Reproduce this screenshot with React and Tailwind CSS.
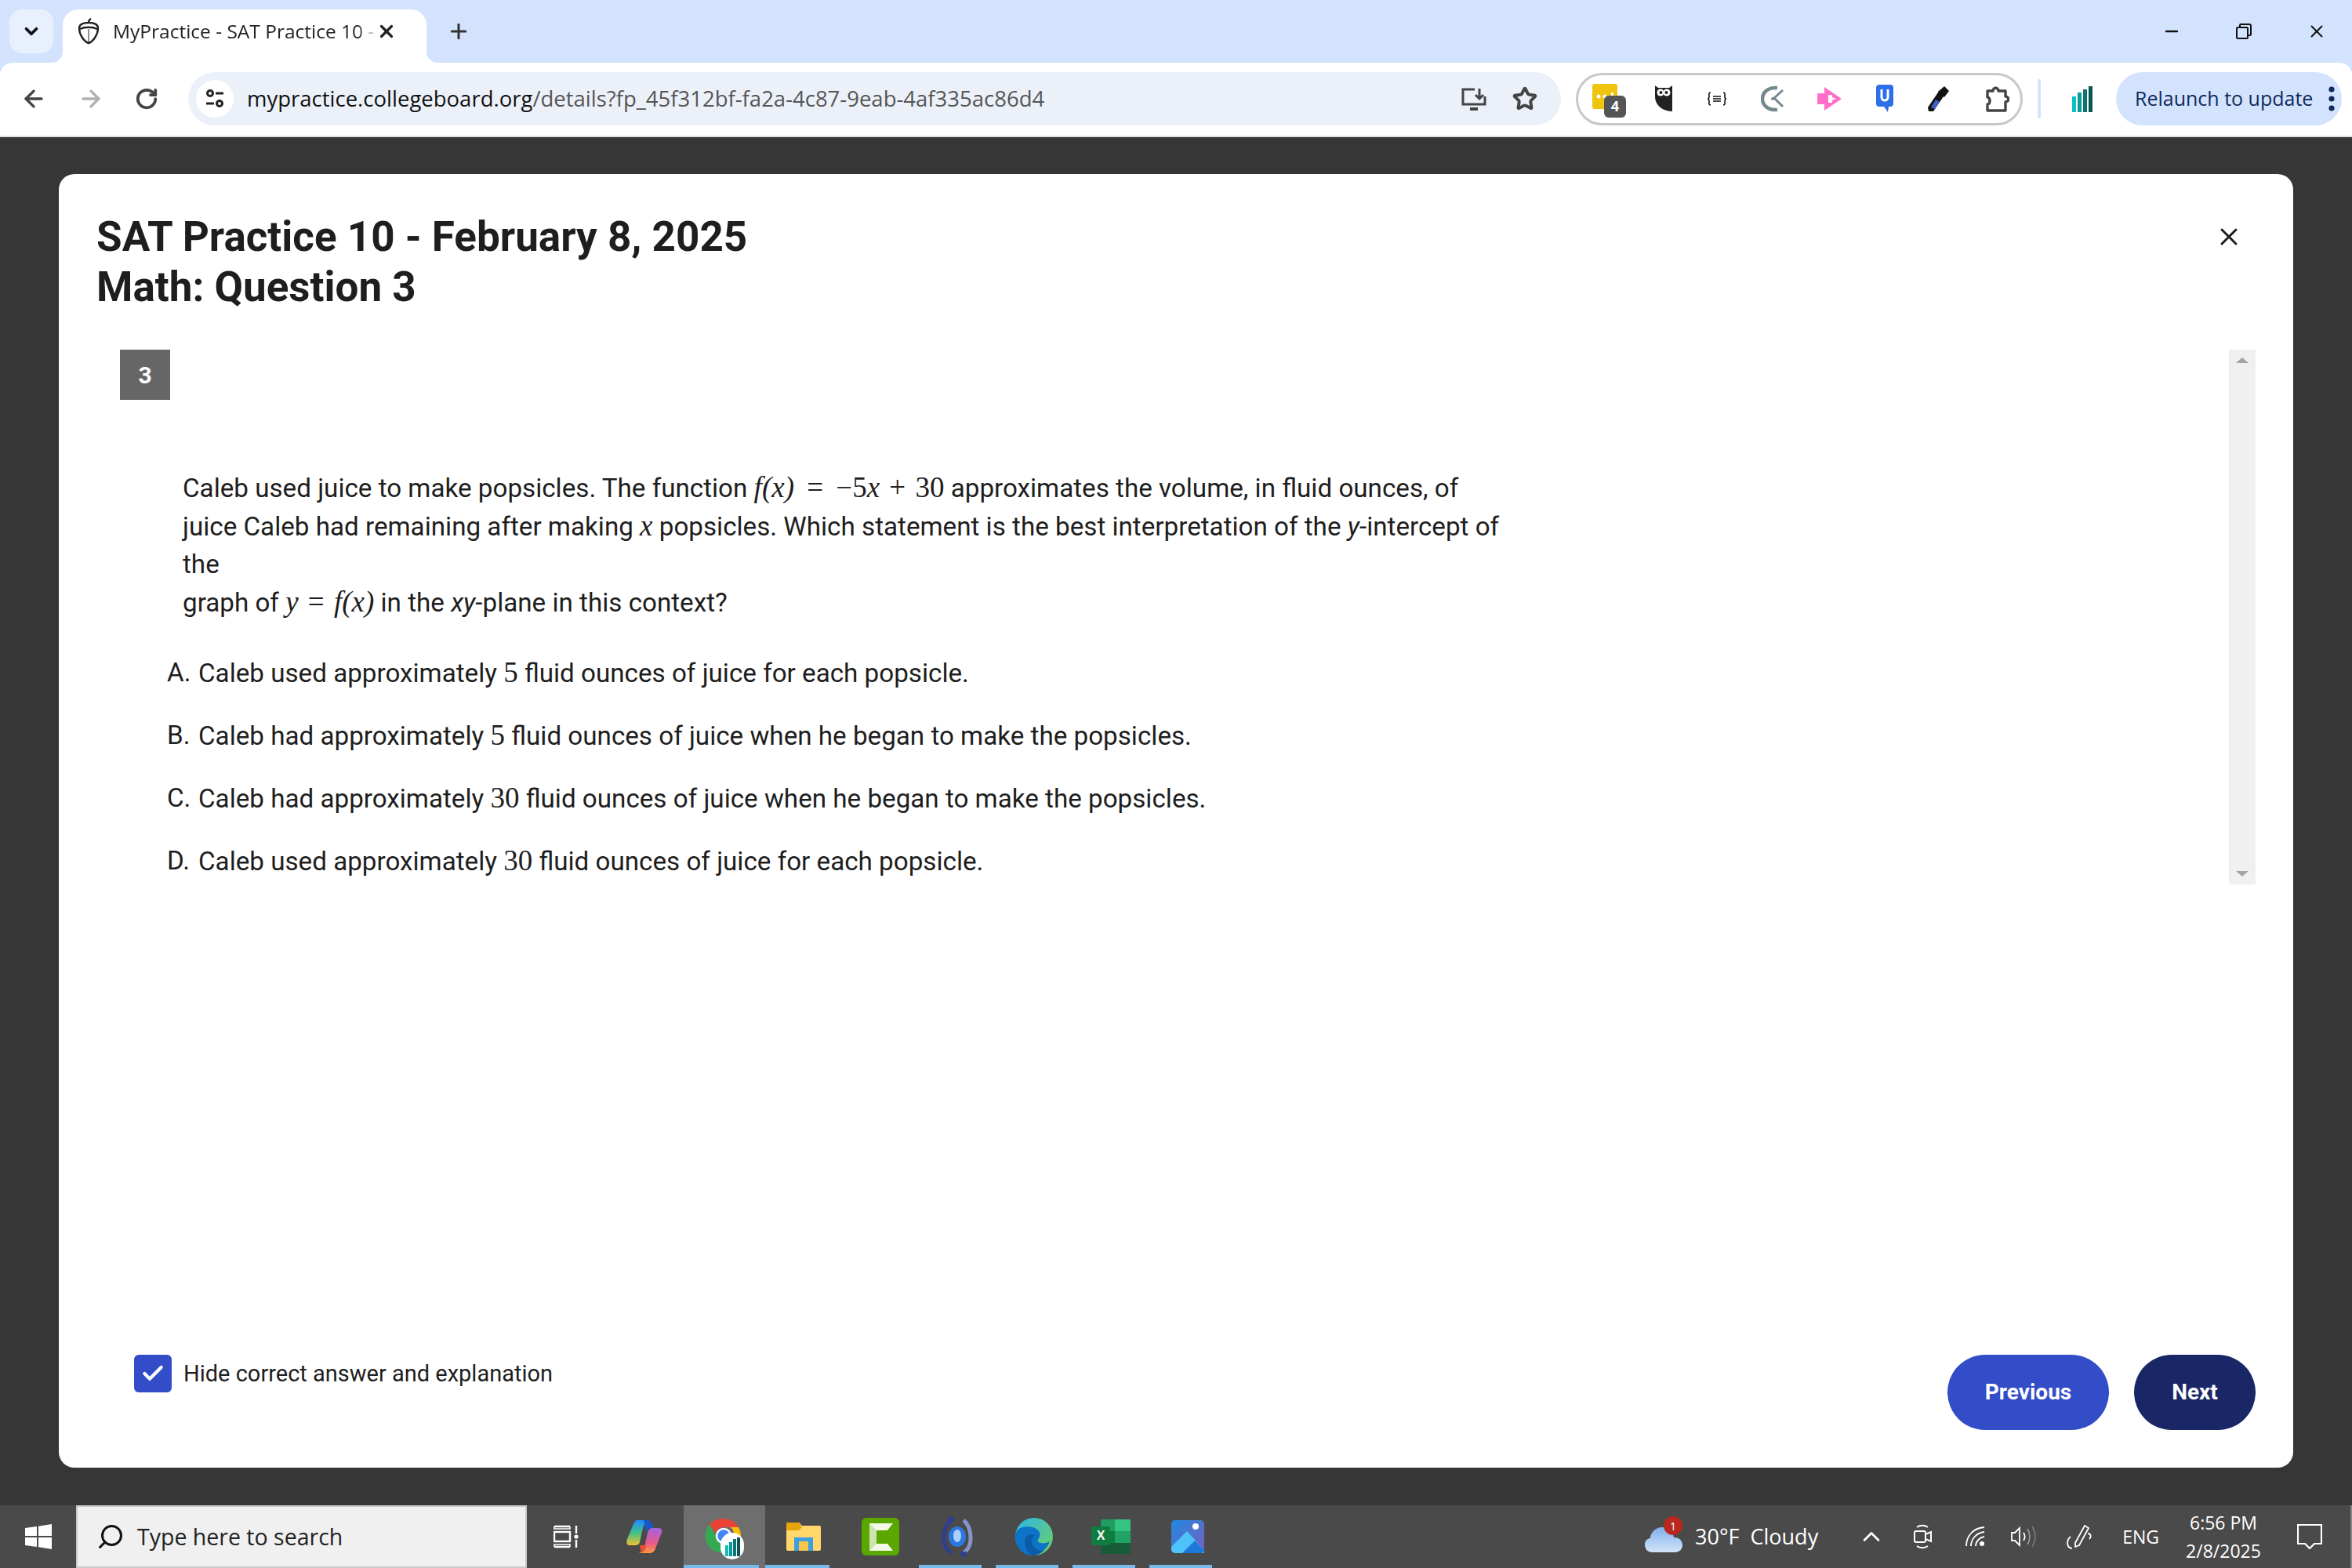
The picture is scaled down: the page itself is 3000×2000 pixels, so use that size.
import React from "react";
import { ArrowLeft, ArrowRight, RotateCw, X, Plus, ChevronDown, Star, ChevronUp, Check, Minus, Search } from "lucide-react";

const M = ({ children, className = "" }) => (
  <span className={`font-['Liberation_Serif',serif] text-[37px] ${className}`}>{children}</span>
);
const I = ({ children, className = "" }) => <M className={`italic ${className}`}>{children}</M>;

const Acorn = () => (
  <svg width="30" height="34" viewBox="0 0 30 34" fill="none" stroke="#222" strokeWidth="2.4">
    <path d="M15 6C8 6 3 8 3 13c0 8 6 17 12 19 6-2 12-11 12-19 0-5-5-7-12-7z" />
    <path d="M4 14c6-3 16-3 22 0" />
    <path d="M15 6c0-2 1-4 3-5" />
    <path d="M15 14v17" strokeWidth="1" />
  </svg>
);

const SiteInfo = () => (
  <svg width="26" height="26" viewBox="0 0 26 26" fill="none" stroke="#222" strokeWidth="3">
    <circle cx="7" cy="6" r="3.5" />
    <path d="M14 6h10M2 19h10" />
    <circle cx="19" cy="19" r="3.5" />
  </svg>
);

const Install = () => (
  <svg width="34" height="30" viewBox="0 0 34 30" fill="none" stroke="#444" strokeWidth="3">
    <path d="M18 3H3v19h28V12" />
    <path d="M12 28h10" strokeWidth="4" />
    <path d="M24 2v13M19 10l5 5 5-5" />
  </svg>
);

const Restore = () => (
  <svg width="20" height="20" viewBox="0 0 20 20" fill="none" stroke="#111" strokeWidth="2">
    <rect x="1" y="5" width="14" height="14" rx="1.5" />
    <path d="M5 5V2a1 1 0 0 1 1-1h11a2 2 0 0 1 2 2v11a1 1 0 0 1-1 1h-3" />
  </svg>
);

const ExtYellow = () => (
  <div className="relative w-[36px] h-[38px]">
    <svg width="32" height="32" viewBox="0 0 32 32">
      <rect width="32" height="32" rx="3" fill="#f1c40f" />
      <circle cx="8" cy="16" r="2.5" fill="#fff" />
      <circle cx="16" cy="16" r="2.5" fill="#fff" />
      <rect x="24" y="11" width="3" height="8" fill="#fff" />
    </svg>
    <div className="absolute left-[15px] top-[15px] w-[28px] h-[28px] rounded-[6px] bg-[#555] text-white text-[19px] font-bold flex items-center justify-center font-['Roboto',sans-serif]">4</div>
  </div>
);
const ExtOwl = () => (
  <svg width="24" height="34" viewBox="0 0 24 34">
    <path d="M1 0l4 3h14l4-3v33C12 33 1 26 1 14z" fill="#222" />
    <circle cx="8" cy="9" r="4.5" fill="#fff" />
    <circle cx="16" cy="9" r="4.5" fill="#fff" />
    <circle cx="8.5" cy="9" r="2" fill="#222" />
    <circle cx="15.5" cy="9" r="2" fill="#222" />
  </svg>
);
const ExtBrace = () => (
  <svg width="26" height="18" viewBox="0 0 26 18" fill="none" stroke="#111" strokeWidth="1.6">
    <path d="M5 1c-3 0-2 3-2 5s-1 3-2 3c1 0 2 1 2 3s-1 5 2 5M21 1c3 0 2 3 2 5s1 3 2 3c-1 0-2 1-2 3s1 5-2 5" />
    <path d="M8 6h10M8 9h10M8 12h10" strokeWidth="1.4" />
  </svg>
);
const ExtClock = () => (
  <svg width="30" height="34" viewBox="0 0 30 34" fill="none" stroke="#74898f" strokeWidth="4.5">
    <path d="M21 3C9 2 2 9 2 17s7 15 19 14" />
    <path d="M28 6l-11 10 11 11" strokeWidth="3" />
    <circle cx="15" cy="17" r="1.5" fill="#74898f" strokeWidth="1" />
  </svg>
);
const ExtPink = () => (
  <svg width="32" height="32" viewBox="0 0 32 32" fill="#ff6ec7">
    <path d="M9 1l22 15L9 31v-8H0V9h9z" />
    <path d="M14 11h5v3l5 2-5 2v3h-5z" fill="#fff" />
  </svg>
);
const ExtU = () => (
  <svg width="22" height="36" viewBox="0 0 22 36">
    <path d="M4 0h14a4 4 0 0 1 4 4v20a4 4 0 0 1-4 4h-2l-1 7-5-7H4a4 4 0 0 1-4-4V4a4 4 0 0 1 4-4z" fill="#2c6fe8" />
    <path d="M7 6v10a4 4 0 0 0 8 0V6" fill="none" stroke="#fff" strokeWidth="3" />
  </svg>
);
const ExtDropper = () => (
  <svg width="30" height="36" viewBox="0 0 30 36">
    <path d="M2 34l-1-5L16 7l7 5L8 34z" fill="#111" />
    <path d="M5 29l6-10 5 3-6 9z" fill="#3f5fc9" />
    <path d="M14 9l8-7 6 6-6 8z" fill="#111" />
  </svg>
);
const Puzzle = () => (
  <svg width="32" height="36" viewBox="0 0 32 36" fill="none" stroke="#444" strokeWidth="3.4" strokeLinejoin="round">
    <path d="M4 8h7c0-5 7-5 7 0h9v7c5 0 5 7 0 7v11H4v-8c4 0 4-9 0-9z" />
  </svg>
);
const Bars = () => (
  <svg width="26" height="34" viewBox="0 0 26 34">
    <rect x="0" y="14" width="5" height="20" fill="#0fc0bf" />
    <rect x="7" y="9" width="5" height="25" fill="#0c9a9a" />
    <rect x="14" y="5" width="5" height="29" fill="#0b7575" />
    <rect x="21" y="1" width="5" height="33" fill="#0a5555" />
  </svg>
);

const WinLogo = () => (
  <svg width="34" height="32" viewBox="0 0 34 32" fill="#fff">
    <path d="M0 5l15-2v12H0zM17 2.700L34 0v15H17zM0 17h15v12L0 27zM17 17h17v15l-17-2.700z" />
  </svg>
);
const TaskView = () => (
  <svg width="32" height="30" viewBox="0 0 32 30" fill="none" stroke="#fff" strokeWidth="2.4">
    <path d="M1 2h20M1 28h20" />
    <path d="M1 2v3h20V2M1 28v-3h20v3" strokeWidth="1.6" />
    <rect x="1" y="9" width="20" height="12" />
    <path d="M29 1v10M29 19v10" />
    <circle cx="29" cy="15" r="2.600" fill="#fff" stroke="none" />
  </svg>
);
const Copilot = () => (
  <svg width="46" height="46" viewBox="0 0 46 46">
    <defs>
      <linearGradient id="cp1" x1="0" y1="0" x2="0" y2="1">
        <stop offset="0" stopColor="#1f8bff" />
        <stop offset="0.5" stopColor="#3fc08a" />
        <stop offset="1" stopColor="#f2c230" />
      </linearGradient>
      <linearGradient id="cp2" x1="0" y1="0" x2="0" y2="1">
        <stop offset="0" stopColor="#a465e0" />
        <stop offset="0.6" stopColor="#e85a8a" />
        <stop offset="1" stopColor="#ff9a3c" />
      </linearGradient>
    </defs>
    <path d="M14 2h14c-4 2-6 6-8 14l-3 14c-1 3-3 4-6 4H3C0 33 0 30 1 26L9 7c1-3 3-5 5-5z" fill="url(#cp1)" />
    <path d="M33 12h8c4 0 5 3 4 6l-8 20c-1 4-4 6-8 6H16c4-2 6-5 8-12l3-14c1-4 3-6 6-6z" fill="url(#cp2)" />
    <path d="M22 2h6c2 0 4 2 5 6l1 4h-3c-3 0-5 2-6 6z" fill="#1757c9" />
    <path d="M17 34l8 0c0 4-2 8-6 10z" fill="#e8502f" />
  </svg>
);
const ChromeIcon = () => (
  <div className="relative w-[50px] h-[50px]">
    <svg width="48" height="48" viewBox="0 0 48 48">
      <path d="M24 2a22 22 0 0 1 19.050 11H24a11 11 0 0 0-10.400 7.400L6 9.500A22 22 0 0 1 24 2z" fill="#ea4335" />
      <path d="M43.050 13A22 22 0 0 1 24 46l9.500-16.500A11 11 0 0 0 33 13z" fill="#fbbc04" />
      <path d="M6 9.500l9 15.500a11 11 0 0 0 14 8.500L24 46A22 22 0 0 1 6 9.500z" fill="#34a853" />
      <circle cx="24" cy="24" r="9" fill="#4285f4" stroke="#fff" strokeWidth="2.500" />
    </svg>
    <div className="absolute left-[20px] top-[20px] w-[30px] h-[34px] rounded-full bg-white flex items-end justify-center pb-[4px] gap-[1px]">
      <div className="w-[4px] h-[14px] bg-[#0fc0bf]" />
      <div className="w-[4px] h-[18px] bg-[#0c9a9a]" />
      <div className="w-[4px] h-[22px] bg-[#0b7575]" />
      <div className="w-[4px] h-[24px] bg-[#0a5555]" />
    </div>
  </div>
);
const Explorer = () => (
  <svg width="44" height="36" viewBox="0 0 44 36">
    <path d="M0 2a2 2 0 0 1 2-2h14l4 4h22a2 2 0 0 1 2 2v28a2 2 0 0 1-2 2H2a2 2 0 0 1-2-2z" fill="#ffd76a" />
    <path d="M0 2a2 2 0 0 1 2-2h14l4 6-4 4H0z" fill="#e5a50a" />
    <path d="M10 19h24v17h-6V24H16v12h-6z" fill="#3ea0e0" />
    <rect x="16" y="24" width="12" height="12" fill="#f7c649" />
  </svg>
);
const Camtasia = () => (
  <svg width="48" height="48" viewBox="0 0 48 48">
    <rect width="48" height="48" rx="6" fill="#5aa700" />
    <path d="M10 7h30l-7 9H19v17h14l7 9H10z" fill="#f4f8e8" />
    <path d="M10 7l9 9v17l-9 9z" fill="#cfe3b0" />
  </svg>
);
const Orb = () => (
  <svg width="48" height="50" viewBox="0 0 48 50" fill="none">
    <path d="M16 4C6 12 2 36 16 46" stroke="#2f3f90" strokeWidth="5" />
    <path d="M32 4c10 8 14 32 0 42" stroke="#8893c9" strokeWidth="5" />
    <rect x="12" y="0" width="8" height="6" fill="#2f3f90" />
    <rect x="28" y="44" width="8" height="6" fill="#2f3f90" />
    <ellipse cx="24" cy="25" rx="11" ry="13" fill="#2b78e0" />
    <ellipse cx="24" cy="24" rx="5" ry="8" fill="#a8d0fa" />
  </svg>
);
const Edge = () => (
  <svg width="48" height="48" viewBox="0 0 48 48">
    <defs>
      <linearGradient id="ed1" x1="0" y1="0" x2="1" y2="1">
        <stop offset="0" stopColor="#2fb6ea" />
        <stop offset="1" stopColor="#6fd25a" />
      </linearGradient>
    </defs>
    <circle cx="24" cy="24" r="24" fill="url(#ed1)" />
    <path d="M0 24C0 12 12 10 22 12c8 2 12 8 8 14-2 3-2 5 2 6 4 1 9 0 12-2-4 10-12 18-22 18C8 48 0 36 0 24z" fill="#0c73c7" />
    <path d="M12 30c0-8 8-10 14-8-4 2-6 6-4 12 2 5 8 9 14 8-4 4-10 6-14 6-6-2-10-10-10-18z" fill="#0d5aa8" />
  </svg>
);
const Excel = () => (
  <div className="relative w-[50px] h-[44px]">
    <svg width="50" height="44" viewBox="0 0 50 44" className="absolute left-0 top-0">
      <path d="M12 2a2 2 0 0 1 2-2h16v15H12z" fill="#1f9d5e" />
      <path d="M30 0h18a2 2 0 0 1 2 2v13H30z" fill="#33c481" />
      <rect x="12" y="15" width="18" height="15" fill="#107c41" />
      <rect x="30" y="15" width="20" height="15" fill="#21a366" />
      <path d="M12 30h38v12a2 2 0 0 1-2 2H14a2 2 0 0 1-2-2z" fill="#185c37" />
    </svg>
    <div className="absolute left-0 top-[9px] w-[24px] h-[24px] rounded-[2px] bg-[#107c41] text-white text-[16px] font-bold flex items-center justify-center font-['Liberation_Sans',sans-serif]">X</div>
  </div>
);
const Photos = () => (
  <svg width="42" height="42" viewBox="0 0 42 42">
    <defs>
      <linearGradient id="ph1" x1="0" y1="0" x2="1" y2="1">
        <stop offset="0" stopColor="#1f8ae0" />
        <stop offset="1" stopColor="#7a5cc0" />
      </linearGradient>
    </defs>
    <rect width="42" height="42" rx="5" fill="url(#ph1)" />
    <circle cx="31" cy="8" r="4" fill="#fff" />
    <path d="M0 34L20 14l22 24v4H5a5 5 0 0 1-5-5z" fill="#4fc3f7" />
    <path d="M14 42l16-16 12 12v0a4 4 0 0 1-4 4z" fill="#1e78d8" />
  </svg>
);

const Cloud = () => (
  <div className="relative w-[48px] h-[40px]">
    <svg width="48" height="34" viewBox="0 0 48 34" className="absolute left-0 top-[6px]">
      <defs>
        <linearGradient id="cl1" x1="0" y1="0" x2="0" y2="1">
          <stop offset="0" stopColor="#7fb0ec" />
          <stop offset="1" stopColor="#d2e4f9" />
        </linearGradient>
      </defs>
      <path d="M10 34C2 34 0 28 0 24c0-6 5-8 7-8 0-8 8-14 15-14 8 0 14 6 15 13 6 0 11 3 11 10 0 5-4 9-10 9z" fill="url(#cl1)" />
    </svg>
    <div className="absolute left-[24px] top-[-6px] w-[24px] h-[24px] rounded-full bg-[#b9281e] text-white text-[14px] flex items-center justify-center font-['Open_Sans',sans-serif]">1</div>
  </div>
);
const MeetIcon = () => (
  <svg width="24" height="32" viewBox="0 0 24 32" fill="none" stroke="#fff" strokeWidth="2">
    <path d="M4 4c4-3 10-3 14 0M4 28c4 3 10 3 14 0" />
    <rect x="1" y="9" width="14" height="14" rx="2" />
    <path d="M15 13l7-3v12l-7-3" />
  </svg>
);
const Wifi = () => (
  <svg width="26" height="26" viewBox="0 0 26 26" fill="none" stroke="#fff" strokeWidth="1.8">
    <path d="M1 25C1 12 10 2 24 1" />
    <path d="M7 25C7 16 14 8 24 7" />
    <path d="M13 25c0-6 5-11 11-12" />
    <circle cx="21" cy="22" r="3" fill="#fff" stroke="none" />
  </svg>
);
const Speaker = () => (
  <svg width="34" height="28" viewBox="0 0 34 28" fill="none" stroke="#fff" strokeWidth="1.8">
    <path d="M1 9h4l6-6v22l-6-6H1z" />
    <path d="M16 9c2 3 2 7 0 10" />
    <path d="M21 4c4 6 4 14 0 20" stroke="#999" />
    <path d="M27 1c5 8 5 18 0 26" stroke="#777" />
  </svg>
);
const Pen = () => (
  <svg width="34" height="32" viewBox="0 0 34 32" fill="none" stroke="#fff" strokeWidth="1.800">
    <path d="M12 24L24 2l5 3-12 22-5 2z" />
    <path d="M6 16c-5 4-6 14 2 15M28 12c4 0 5 4 2 7" />
  </svg>
);
const Notif = () => (
  <svg width="32" height="32" viewBox="0 0 32 32" fill="none" stroke="#fff" strokeWidth="2.200">
    <path d="M1 1h30v24H22l-6 6-6-6H1z" />
  </svg>
);

const TaskSlot = ({ w, bar, barW, active, children }) => (
  <div className={`relative h-full flex items-center justify-center shrink-0 ${w} ${active ? "bg-[#6e6e6e]" : ""}`}>
    {children}
    {bar && <div className={`absolute left-0 bottom-0 h-[4px] ${barW} bg-[#76b9ed]`} />}
  </div>
);

const options = [
  ["A.", "Caleb used approximately ", "5", " fluid ounces of juice for each popsicle."],
  ["B.", "Caleb had approximately ", "5", " fluid ounces of juice when he began to make the popsicles."],
  ["C.", "Caleb had approximately ", "30", " fluid ounces of juice when he began to make the popsicles."],
  ["D.", "Caleb used approximately ", "30", " fluid ounces of juice for each popsicle."],
];

export default function App() {
  return (
    <div className="w-[3000px] h-[2000px] flex flex-col bg-[#363636] overflow-hidden">
      {/* title bar */}
      <div className="h-[80px] bg-[#d3e3fd] flex shrink-0 font-['Open_Sans',sans-serif]">
        <div className="ml-[12px] mt-[12px] w-[56px] h-[56px] rounded-[16px] bg-[#e9f0fd] flex items-center justify-center">
          <ChevronDown size={26} strokeWidth={3.5} color="#111" />
        </div>
        <div className="relative ml-[12px] mt-[12px] w-[464px] h-[68px] bg-white rounded-t-[20px] flex items-center pl-[18px] pb-[12px]">
          <div className="absolute left-[-14px] bottom-0 w-[14px] h-[14px] bg-white">
            <div className="w-full h-full bg-[#d3e3fd] rounded-br-[14px]" />
          </div>
          <div className="absolute right-[-14px] bottom-0 w-[14px] h-[14px] bg-white">
            <div className="w-full h-full bg-[#d3e3fd] rounded-bl-[14px]" />
          </div>
          <Acorn />
          <span className="ml-[16px] w-[338px] text-[24.5px] text-[#222] whitespace-nowrap overflow-hidden [mask-image:linear-gradient(to_right,black_92%,transparent)]">
            MyPractice - SAT Practice 10 - February 8
          </span>
          <X size={26} strokeWidth={3} color="#222" className="ml-[-2px]" />
        </div>
        <div className="ml-[26px] mt-[26px] h-[28px] flex items-center">
          <Plus size={30} strokeWidth={2.4} color="#333" />
        </div>
        <div className="ml-auto flex items-center h-[80px] pr-[32px] gap-[70px]">
          <Minus size={24} strokeWidth={2.4} color="#111" />
          <Restore />
          <X size={26} strokeWidth={1.8} color="#111" />
        </div>
      </div>

      {/* toolbar */}
      <div className="h-[95px] shrink-0 bg-[#d3e3fd]">
        <div className="h-[93px] bg-white rounded-t-[16px] flex items-center font-['Open_Sans',sans-serif] pb-[1px]">
          <div className="w-[240px] shrink-0 flex items-center pl-[26px] gap-[39px]">
            <ArrowLeft size={34} strokeWidth={2.4} color="#444" />
            <ArrowRight size={34} strokeWidth={2.4} color="#b0b0b0" />
            <RotateCw size={30} strokeWidth={3} color="#444" />
          </div>
          <div className="w-[1751px] h-[68px] rounded-full bg-[#ecf1f9] flex items-center shrink-0">
            <div className="ml-[10px] w-[48px] h-[48px] rounded-full bg-white flex items-center justify-center">
              <SiteInfo />
            </div>
            <div className="ml-[17px] text-[27.500px] text-[#555] whitespace-nowrap">
              <span className="text-[#111]">mypractice.collegeboard.org</span>/details?fp_45f312bf-fa2a-4c87-9eab-4af335ac86d4
            </div>
            <div className="ml-auto mr-[30px] flex items-center gap-[32px]">
              <Install />
              <Star size={32} strokeWidth={3} color="#444" />
            </div>
          </div>
          <div className="ml-[19px] w-[570px] h-[67px] rounded-full border-[3px] border-[#c8c8c8] shrink-0 flex items-center justify-between pl-[18px] pr-[14px]">
            <ExtYellow />
            <ExtOwl />
            <ExtBrace />
            <ExtClock />
            <ExtPink />
            <ExtU />
            <ExtDropper />
            <Puzzle />
          </div>
          <div className="ml-[19px] w-[4px] h-[50px] rounded-full bg-[#d3e3fd] shrink-0" />
          <div className="ml-[40px] shrink-0"><Bars /></div>
          <div className="ml-[30px] w-[288px] h-[68px] rounded-full bg-[#d3e3fd] flex items-center pl-[24px] text-[25px] text-[#0f2a5c] whitespace-nowrap shrink-0">
            Relaunch to update
            <svg width="8" height="32" viewBox="0 0 8 32" fill="#0f2a5c" className="ml-[20px]">
              <circle cx="4" cy="4" r="3.600" />
              <circle cx="4" cy="16" r="3.600" />
              <circle cx="4" cy="28" r="3.600" />
            </svg>
          </div>
        </div>
      </div>
      <div className="hidden" />

      {/* overlay */}
      <main className="flex-1 min-h-0 px-[75px] pt-[47px] pb-[48px] bg-[#363636] border-t-[2px] border-[#e0e0e0] -mt-[2px]">
        <div className="h-full bg-white rounded-[20px] pl-[48px] pr-[48px] pt-[48px] pb-[48px] flex flex-col font-['Roboto',sans-serif]">
          <div className="flex justify-between shrink-0">
            <h1 className="text-[53px] leading-[64px] font-bold text-[#1e1e1e]">
              SAT Practice 10 - February 8, 2025
              <br />
              Math: Question 3
            </h1>
            <div className="mr-[16px] mt-[14px] h-[36px]">
              <X size={36} strokeWidth={2} color="#1e1e1e" />
            </div>
          </div>

          <div className="mt-[48px] h-[682px] shrink-0 flex">
            <div className="flex-1 pl-[30px] text-[#1e1e1e] text-[33.200px]">
              <div className="w-[64px] h-[64px] bg-[#666] text-white font-bold text-[30px] flex items-center justify-center">3</div>
              <p className="mt-[88px] ml-[80px] w-[1700px] leading-[48px]">
                Caleb used juice to make popsicles. The function <I>f(x)</I> <M className="mx-[8px]">=</M> <M>−5</M><I>x</I> <M className="mx-[4px]">+</M> <M>30</M> approximates the volume, in fluid ounces, of
                <br />
                juice Caleb had remaining after making <I>x</I> popsicles. Which statement is the best interpretation of the <em>y</em>-intercept of the
                <br />
                graph of <I>y</I> <M className="mx-[4px]">=</M> <I>f(x)</I> in the <em>xy</em>-plane in this context?
              </p>
              <div className="mt-[41px] flex flex-col gap-[31px]">
                {options.map(([l, a, n, b]) => (
                  <div key={l} className="flex leading-[48px] pl-[60px]">
                    <span className="w-[40px] shrink-0">{l}</span>
                    <span className="whitespace-pre">
                      {a}
                      <M>{n}</M>
                      {b}
                    </span>
                  </div>
                ))}
              </div>
            </div>
            <div className="w-[34px] h-full bg-[#f0f0f0] flex flex-col items-center justify-between py-[10px] shrink-0">
              <div className="w-0 h-0 border-x-[8px] border-x-transparent border-b-[7px] border-b-[#a3a3a3]" />
              <div className="w-0 h-0 border-x-[8px] border-x-transparent border-t-[7px] border-t-[#a3a3a3]" />
            </div>
          </div>

          <div className="flex-1 flex items-end justify-between">
            <div className="flex items-start self-end h-[96px] pl-[48px]">
              <div className="w-[48px] h-[48px] rounded-[6px] bg-[#324dc7] flex items-center justify-center">
                <Check size={32} strokeWidth={3.2} color="#fff" />
              </div>
              <span className="ml-[15px] text-[29px] leading-[48px] text-[#1e1e1e]">Hide correct answer and explanation</span>
            </div>
            <div className="flex gap-[32px]">
              <button className="w-[206px] h-[96px] rounded-full bg-[#324dc7] text-white font-bold text-[28px]">Previous</button>
              <button className="w-[155px] h-[96px] rounded-full bg-[#1a2766] text-white font-bold text-[28px]">Next</button>
            </div>
          </div>
        </div>
      </main>

      {/* taskbar */}
      <div className="h-[80px] shrink-0 bg-[#4a4a4a] flex items-center font-['Open_Sans',sans-serif]">
        <div className="w-[97px] h-full flex items-center justify-center shrink-0"><WinLogo /></div>
        <div className="w-[575px] h-full bg-[#f0f0f0] border-x-[2px] border-y-[2px] border-[#c8c8c8] flex items-center pl-[24px] shrink-0">
          <Search size={36} strokeWidth={2} color="#111" className="-scale-x-100" />
          <span className="ml-[16px] text-[28.500px] text-[#222]">Type here to search</span>
        </div>
        <TaskSlot w="w-[100px]"><TaskView /></TaskSlot>
        <TaskSlot w="w-[100px]"><Copilot /></TaskSlot>
        <TaskSlot w="w-[104px]" bar barW="w-[96px]" active><ChromeIcon /></TaskSlot>
        <TaskSlot w="w-[98px]" bar barW="w-[82px]"><Explorer /></TaskSlot>
        <TaskSlot w="w-[98px]"><Camtasia /></TaskSlot>
        <TaskSlot w="w-[98px]" bar barW="w-[80px]"><Orb /></TaskSlot>
        <TaskSlot w="w-[98px]" bar barW="w-[80px]"><Edge /></TaskSlot>
        <TaskSlot w="w-[98px]" bar barW="w-[80px]"><Excel /></TaskSlot>
        <TaskSlot w="w-[98px]" bar barW="w-[80px]"><Photos /></TaskSlot>

        <div className="ml-auto flex items-center h-full text-white shrink-0 border-r-[2px] border-r-[#888] pr-[36px]">
          <Cloud />
          <span className="ml-[16px] text-[27px] whitespace-pre">30°F  Cloudy</span>
          <ChevronUp size={36} strokeWidth={1.8} color="#fff" className="ml-[50px]" />
          <div className="ml-[36px]"><MeetIcon /></div>
          <div className="ml-[42px]"><Wifi /></div>
          <div className="ml-[32px]"><Speaker /></div>
          <div className="ml-[36px]"><Pen /></div>
          <span className="ml-[38px] text-[23px]">ENG</span>
          <div className="ml-[32px] w-[100px] text-[23px] leading-[36px] text-center whitespace-nowrap flex flex-col items-center">
            <span>6:56 PM</span>
            <span>2/8/2025</span>
          </div>
          <div className="ml-[44px]"><Notif /></div>
        </div>
      </div>
    </div>
  );
}
